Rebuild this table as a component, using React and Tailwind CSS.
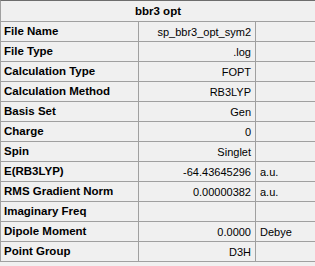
import React from "react";

const rows = [
  { label: "File Name", value: "sp_bbr3_opt_sym2", unit: "" },
  { label: "File Type", value: ".log", unit: "" },
  { label: "Calculation Type", value: "FOPT", unit: "" },
  { label: "Calculation Method", value: "RB3LYP", unit: "" },
  { label: "Basis Set", value: "Gen", unit: "" },
  { label: "Charge", value: "0", unit: "" },
  { label: "Spin", value: "Singlet", unit: "" },
  { label: "E(RB3LYP)", value: "-64.43645296", unit: "a.u." },
  { label: "RMS Gradient Norm", value: "0.00000382", unit: "a.u." },
  { label: "Imaginary Freq", value: "", unit: "" },
  { label: "Dipole Moment", value: "0.0000", unit: "Debye" },
  { label: "Point Group", value: "D3H", unit: "" },
];

const App = () => {
  return (
    <div
      className="w-[315px] h-[266px] bg-[#f0f0f0] text-[11px] text-black overflow-hidden"
      style={{ fontFamily: '"Liberation Sans", Arial, sans-serif' }}
    >
      <div className="border-t border-l border-t-[#6d6d6d] border-l-[#a0a0a0]">
        <div className="h-[21px] border-b border-[#a0a0a0] flex items-center justify-center pt-px font-bold text-[11.5px]">
          bbr3 opt
        </div>
        {rows.map((row, index) => (
          <div
            className="grid grid-cols-[138px_117px_1fr] h-[20px] border-b border-[#a0a0a0]"
            key={index}
          >
            <div className="border-r border-[#a0a0a0] flex items-center pl-[3px] pt-px font-bold text-[11.5px]">
              {row.label}
            </div>
            <div className="border-r border-[#a0a0a0] flex items-center justify-end pr-[4px] pt-px">
              {row.value}
            </div>
            <div className="flex items-center pl-[4px] pt-px">{row.unit}</div>
          </div>
        ))}
      </div>
    </div>
  );
};

export default App;
